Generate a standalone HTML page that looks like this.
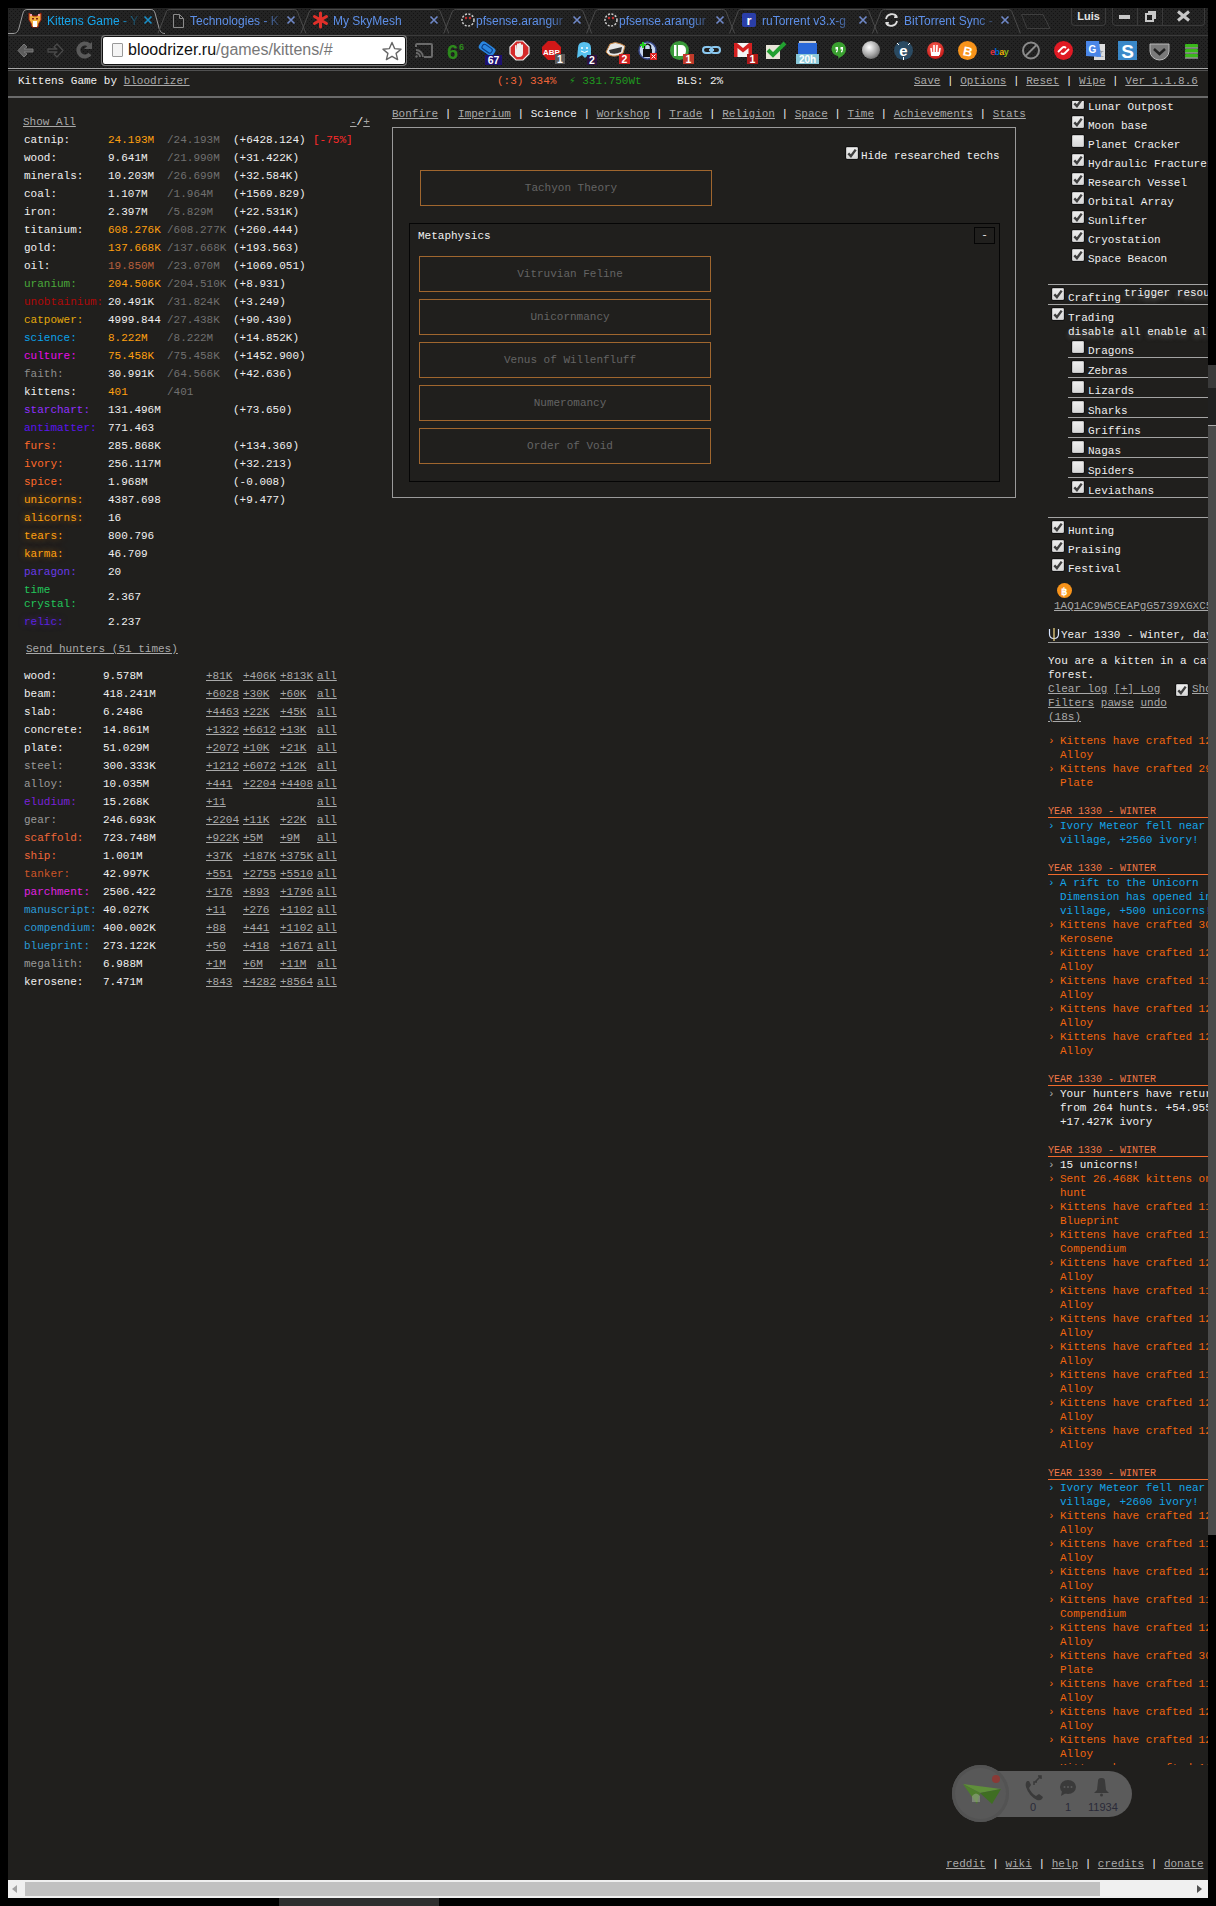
<!DOCTYPE html><html><head><meta charset="utf-8"><style>
*{margin:0;padding:0;box-sizing:border-box}
html,body{width:1216px;height:1906px;overflow:hidden;background:#000}
body{position:relative;font-family:"Liberation Mono",monospace;font-size:11px;line-height:14px;color:#e8e8e8}
.ab{position:absolute;white-space:pre}
u{text-decoration:underline;text-underline-offset:1px}
.lk{color:#a9a9a9;text-decoration:underline;text-underline-offset:1px}
.cb{position:absolute;width:12px;height:12px;border-radius:2px;background:linear-gradient(#f0f0f0,#d6d6d6);box-shadow:inset 0 0 0 1px #c4c4c4,0 0 0 1px #111}
.cb svg{position:absolute;left:0;top:0}
.sans{font-family:"Liberation Sans",sans-serif}
</style></head><body>

<svg class="ab" style="left:8px;top:8px" width="1200" height="60"><defs><pattern id="tx" width="4" height="4" patternUnits="userSpaceOnUse"><rect width="4" height="4" fill="#232323"/><rect x="1" y="1" width="1" height="1" fill="#131313"/><rect x="3" y="3" width="1" height="1" fill="#131313"/></pattern></defs><rect width="1200" height="60" fill="url(#tx)"/></svg>
<svg class="ab" style="left:0;top:0" width="1216" height="70"><path d="M13.0,33.5 C17.0,33.5 18.0,31 19.0,28 L23.0,13 C24.0,10 25.0,9.5 28.0,9.5 L150.0,9.5 C153.0,9.5 154.0,10 155.0,13 L159.0,28 C160.0,31 161.0,33.5 165.0,33.5" fill="none" stroke="#9a9a9a" stroke-width="1"/><path d="M157.9,33.5 L165.9,13 C166.9,10 167.9,9.5 170.9,9.5 L292.9,9.5 C295.9,9.5 296.9,10 297.9,13 L305.9,33.5" fill="none" stroke="#4a4a4a" stroke-width="1"/><path d="M300.8,33.5 L308.8,13 C309.8,10 310.8,9.5 313.8,9.5 L435.8,9.5 C438.8,9.5 439.8,10 440.8,13 L448.8,33.5" fill="none" stroke="#4a4a4a" stroke-width="1"/><path d="M443.70000000000005,33.5 L451.70000000000005,13 C452.70000000000005,10 453.70000000000005,9.5 456.70000000000005,9.5 L578.7,9.5 C581.7,9.5 582.7,10 583.7,13 L591.7,33.5" fill="none" stroke="#4a4a4a" stroke-width="1"/><path d="M586.6,33.5 L594.6,13 C595.6,10 596.6,9.5 599.6,9.5 L721.6,9.5 C724.6,9.5 725.6,10 726.6,13 L734.6,33.5" fill="none" stroke="#4a4a4a" stroke-width="1"/><path d="M729.5,33.5 L737.5,13 C738.5,10 739.5,9.5 742.5,9.5 L864.5,9.5 C867.5,9.5 868.5,10 869.5,13 L877.5,33.5" fill="none" stroke="#4a4a4a" stroke-width="1"/><path d="M872.4000000000001,33.5 L880.4000000000001,13 C881.4000000000001,10 882.4000000000001,9.5 885.4000000000001,9.5 L1007.4000000000001,9.5 C1010.4000000000001,9.5 1011.4000000000001,10 1012.4000000000001,13 L1020.4000000000001,33.5" fill="none" stroke="#4a4a4a" stroke-width="1"/><path d="M1021.5,14.5 L1043,14.5 L1050,28.5 L1027,28.5 Z" fill="none" stroke="#3e3e3e"/><line x1="8" y1="35.5" x2="1208" y2="35.5" stroke="#3a3a3a"/><line x1="8" y1="33.5" x2="13" y2="33.5" stroke="#9a9a9a"/></svg>
<div class="ab sans" style="left:47px;top:13px;width:96px;overflow:hidden;font-size:12px;line-height:16px;color:#16a6ec;-webkit-mask-image:linear-gradient(90deg,#000 75%,transparent 100%)">Kittens Game - Y</div>
<svg class="ab" style="left:143px;top:15px" width="10" height="10"><path d="M1.5,1.5 L8.5,8.5 M8.5,1.5 L1.5,8.5" stroke="#1a8fc8" stroke-width="1.6"/></svg>
<div class="ab sans" style="left:190px;top:13px;width:96px;overflow:hidden;font-size:12px;line-height:16px;color:#5d8fe8;-webkit-mask-image:linear-gradient(90deg,#000 75%,transparent 100%)">Technologies - K</div>
<svg class="ab" style="left:286px;top:15px" width="10" height="10"><path d="M1.5,1.5 L8.5,8.5 M8.5,1.5 L1.5,8.5" stroke="#6f88c8" stroke-width="1.6"/></svg>
<div class="ab sans" style="left:333px;top:13px;width:96px;overflow:hidden;font-size:12px;line-height:16px;color:#5d8fe8;-webkit-mask-image:linear-gradient(90deg,#000 75%,transparent 100%)">My SkyMesh</div>
<svg class="ab" style="left:429px;top:15px" width="10" height="10"><path d="M1.5,1.5 L8.5,8.5 M8.5,1.5 L1.5,8.5" stroke="#6f88c8" stroke-width="1.6"/></svg>
<div class="ab sans" style="left:476px;top:13px;width:96px;overflow:hidden;font-size:12px;line-height:16px;color:#5d8fe8;-webkit-mask-image:linear-gradient(90deg,#000 75%,transparent 100%)">pfsense.arangur</div>
<svg class="ab" style="left:572px;top:15px" width="10" height="10"><path d="M1.5,1.5 L8.5,8.5 M8.5,1.5 L1.5,8.5" stroke="#6f88c8" stroke-width="1.6"/></svg>
<div class="ab sans" style="left:619px;top:13px;width:96px;overflow:hidden;font-size:12px;line-height:16px;color:#5d8fe8;-webkit-mask-image:linear-gradient(90deg,#000 75%,transparent 100%)">pfsense.arangur</div>
<svg class="ab" style="left:715px;top:15px" width="10" height="10"><path d="M1.5,1.5 L8.5,8.5 M8.5,1.5 L1.5,8.5" stroke="#6f88c8" stroke-width="1.6"/></svg>
<div class="ab sans" style="left:762px;top:13px;width:96px;overflow:hidden;font-size:12px;line-height:16px;color:#5d8fe8;-webkit-mask-image:linear-gradient(90deg,#000 75%,transparent 100%)">ruTorrent v3.x-g</div>
<svg class="ab" style="left:858px;top:15px" width="10" height="10"><path d="M1.5,1.5 L8.5,8.5 M8.5,1.5 L1.5,8.5" stroke="#6f88c8" stroke-width="1.6"/></svg>
<div class="ab sans" style="left:904px;top:13px;width:96px;overflow:hidden;font-size:12px;line-height:16px;color:#5d8fe8;-webkit-mask-image:linear-gradient(90deg,#000 75%,transparent 100%)">BitTorrent Sync -</div>
<svg class="ab" style="left:1000px;top:15px" width="10" height="10"><path d="M1.5,1.5 L8.5,8.5 M8.5,1.5 L1.5,8.5" stroke="#6f88c8" stroke-width="1.6"/></svg>
<svg class="ab" style="left:0;top:0" width="1216" height="34"><path d="M29,13 L33,16 L37,16 L41,13 L41,20 L39,23 L38,27 L32,27 L31,23 L29,20 Z" fill="#f0b040" stroke="#a02010" stroke-width="1"/><rect x="33" y="21" width="4" height="6" fill="#fff"/><rect x="30" y="14" width="2" height="2" fill="#f4a0b0"/><rect x="38" y="14" width="2" height="2" fill="#f4a0b0"/><rect x="32" y="18" width="2" height="1.5" fill="#802010"/><rect x="36" y="18" width="2" height="1.5" fill="#802010"/><path d="M173.5,14.5 L179.5,14.5 L183.5,18.5 L183.5,27.5 L173.5,27.5 Z M179.5,14.5 L179.5,18.5 L183.5,18.5" fill="none" stroke="#8a8a8a" stroke-width="1"/><g stroke="#e0302a" stroke-width="3" stroke-linecap="round"><path d="M320.5,13 L320.5,27 M314.5,16.5 L326.5,23.5 M326.5,16.5 L314.5,23.5"/></g><circle cx="320.5" cy="20" r="3" fill="#e0302a"/><circle cx="468" cy="20" r="6" fill="none" stroke="#cfcfcf" stroke-width="1.5" stroke-dasharray="2 1.5"/><circle cx="466" cy="18" r="1.2" fill="#c03030"/><circle cx="470" cy="18" r="1.2" fill="#c03030"/><circle cx="611" cy="20" r="6" fill="none" stroke="#cfcfcf" stroke-width="1.5" stroke-dasharray="2 1.5"/><circle cx="609" cy="18" r="1.2" fill="#c03030"/><circle cx="613" cy="18" r="1.2" fill="#c03030"/><rect x="742" y="13" width="14" height="14" rx="2" fill="#2a3ea8"/><text x="749" y="25" font-family="Liberation Sans" font-weight="bold" font-size="13" fill="#fff" text-anchor="middle">r</text><path d="M886,19 A6,6 0 0 1 897,17 M897,21 A6,6 0 0 1 886,23" fill="none" stroke="#ddd" stroke-width="1.8"/><path d="M895,14 L898,18 L894,18 Z M888,26 L885,22 L889,22 Z" fill="#ddd"/></svg>
<div class="ab sans" style="left:1071px;top:8px;width:35px;height:18px;border:1px solid #3a3a3a;border-top:none;border-radius:0 0 4px 4px;color:#e4e4e4;font-weight:bold;font-size:11px;line-height:17px;text-align:center">Luis</div>
<div class="ab" style="left:1112px;top:8px;width:93px;height:18px;border:1px solid #3a3a3a;border-top:none;border-radius:0 0 4px 4px"></div>
<div class="ab" style="left:1137px;top:8px;width:1px;height:17px;background:#3a3a3a"></div>
<div class="ab" style="left:1162px;top:8px;width:1px;height:17px;background:#3a3a3a"></div>
<div class="ab" style="left:1119px;top:15px;width:11px;height:4px;background:#c8c8c8"></div>
<div class="ab" style="left:1145px;top:13px;width:9px;height:9px;border:2px solid #c8c8c8"></div>
<div class="ab" style="left:1148px;top:11px;width:8px;height:8px;border-top:2px solid #c8c8c8;border-right:2px solid #c8c8c8"></div>
<svg class="ab" style="left:1176px;top:10px" width="15" height="12"><path d="M2,1.5 L13,10.5 M13,1.5 L2,10.5" stroke="#c8c8c8" stroke-width="3"/></svg>
<svg class="ab" style="left:14px;top:40px" width="84" height="22"><path d="M4,10.5 L10,4 L13,7 L10,9 L19,9 L19,12 L10,12 L13,14 L10,17 Z" fill="#5c5c5c" stroke="#7a7a7a" stroke-width="1" stroke-linejoin="round"/><path d="M49,10.5 L43,4 L40,7 L43,9 L34,9 L34,12 L43,12 L40,14 L43,17 Z" fill="#1e1e1e" stroke="#4a4a4a" stroke-width="1.3" stroke-linejoin="round"/><path d="M75,5 A6.5,6.5 0 1 0 76,14" fill="none" stroke="#5a5a5a" stroke-width="4"/><path d="M70,9 L78,9 L78,2 Z" fill="#5a5a5a"/></svg>
<div class="ab" style="left:102px;top:36px;width:304px;height:29px;background:#fff;border:1px solid #111;border-radius:3px;box-shadow:0 0 0 1px #777"></div>
<div class="ab" style="left:112px;top:43px;width:11px;height:14px;border:1px solid #999;background:#f4f4f4;border-radius:1px"></div>
<div class="ab sans" style="left:128px;top:41px;font-size:16px;line-height:18px;color:#111">bloodrizer.ru<span style="color:#777">/games/kittens/#</span></div>
<svg class="ab" style="left:381px;top:41px" width="22" height="20"><path d="M11,1.5 L13.6,7.6 L20,8.2 L15.1,12.4 L16.6,18.6 L11,15.3 L5.4,18.6 L6.9,12.4 L2,8.2 L8.4,7.6 Z" fill="none" stroke="#666" stroke-width="1.4" stroke-linejoin="round"/></svg>
<svg class="ab" style="left:0;top:0" width="1216" height="68"><path d="M416,47 L416,45 Q416,44 417,44 L431,44 Q432,44 432,45 L432,56 Q432,57 431,57 L424,57" fill="none" stroke="#6a6a6a" stroke-width="2"/><path d="M416,50 A7,7 0 0 1 423,57 M416,53 A4,4 0 0 1 420,57" fill="none" stroke="#6a6a6a" stroke-width="1.8"/><circle cx="416.5" cy="56.5" r="1.2" fill="#6a6a6a"/><text x="447" y="59" font-family="Liberation Sans" font-weight="bold" font-size="20" fill="#2d8a1c">6</text><text x="459" y="50" font-family="Liberation Sans" font-weight="bold" font-size="9" fill="#2d8a1c">6</text><g transform="rotate(35 487 48)"><rect x="479" y="44" width="17" height="9" rx="3" fill="#2a86e0"/><rect x="482" y="46" width="11" height="5" rx="2" fill="none" stroke="#0a3a80" stroke-width="1"/></g><rect x="485" y="55" width="17" height="10" fill="#1c1070"/><text x="493.5" y="64" font-family="Liberation Sans" font-weight="bold" font-size="10.5" fill="#fff" text-anchor="middle">67</text><path d="M516,41 L523,41 L529,47 L529,54 L523,60 L516,60 L510,54 L510,47 Z" fill="#d42a2a" stroke="#eee" stroke-width="1.2"/><path d="M515,55 L515,46 Q515,44.5 516.5,45 L517,50 L517,44 Q518,42.5 519,44 L519,50 L519,43.5 Q520,42 521,43.5 L521,50 L521,45 Q522,43.5 523,45 L523,53 Q523,57 519,57 L517,57 Z" fill="#eee"/><path d="M548,41 L555,41 L561,47 L561,54 L555,60 L548,60 L542,54 L542,47 Z" fill="#d01818"/><text x="551.5" y="55" font-family="Liberation Sans" font-weight="bold" font-size="8" fill="#fff" text-anchor="middle">ABP</text><rect x="555" y="54" width="10" height="10" fill="#5a5a5a"/><text x="560.0" y="63" font-family="Liberation Sans" font-weight="bold" font-size="10.5" fill="#fff" text-anchor="middle">1</text><path d="M577,58 L578,48 Q578,42 584,42 Q591,42 591,48 L591,57 L588,55 L585,58 L582,55 Z" fill="#58c2f0"/><circle cx="582" cy="48" r="1" fill="#fff"/><circle cx="587" cy="48" r="1" fill="#fff"/><path d="M581,51 Q584.5,54 588,51" stroke="#fff" fill="none" stroke-width="1"/><rect x="587" y="55" width="10" height="10" fill="#2a1040"/><text x="592.0" y="64" font-family="Liberation Sans" font-weight="bold" font-size="10.5" fill="#fff" text-anchor="middle">2</text><path d="M606,52 L610,44 Q615,41 621,44 L625,46 L623,53 Q616,58 609,55 Z" fill="#e8e8e8" stroke="#c08040" stroke-width="1"/><path d="M609,50 L622,47 L621,52 Q615,55 610,53 Z" fill="#333"/><rect x="619" y="54" width="11" height="10" fill="#d02020"/><text x="624.5" y="63" font-family="Liberation Sans" font-weight="bold" font-size="10.5" fill="#fff" text-anchor="middle">2</text><circle cx="647.5" cy="50.5" r="8.5" fill="#c8d8f0" stroke="#3a4a8a" stroke-width="1.5"/><rect x="643" y="49" width="9" height="8" fill="#111"/><path d="M644.5,49 L644.5,46 Q647.5,42 650.5,46 L650.5,49" fill="none" stroke="#111" stroke-width="1.5"/><path d="M643,42 L643,48 M640,45 L646,45" stroke="#22cc22" stroke-width="2"/><rect x="650" y="53" width="7" height="7" fill="#e02020"/><path d="M651.5,54.5 L655.5,58.5 M655.5,54.5 L651.5,58.5" stroke="#fff" stroke-width="1"/><circle cx="679.5" cy="50.5" r="9.5" fill="#3a9a3a"/><rect x="674" y="45" width="2.5" height="11" fill="#fff"/><path d="M678,45 L681,45 Q686,45 686,50.5 Q686,56 681,56 L678,56 Z" fill="#fff"/><rect x="683" y="54" width="11" height="10" fill="#c03a2a"/><text x="688.5" y="63" font-family="Liberation Sans" font-weight="bold" font-size="10.5" fill="#fff" text-anchor="middle">1</text><rect x="703" y="47" width="9" height="6" rx="3" fill="none" stroke="#8ac8f0" stroke-width="2"/><rect x="711" y="47" width="9" height="6" rx="3" fill="none" stroke="#8ac8f0" stroke-width="2"/><rect x="709" y="49" width="5" height="2" fill="#8ac8f0"/><rect x="734" y="43" width="18" height="14" fill="#f4f4f4"/><path d="M734,43 L734,57 L737.5,57 L737.5,48 L743,52.5 L748.5,48 L748.5,57 L752,57 L752,43 L749,43 L743,48 L737,43 Z" fill="#d42020"/><rect x="747" y="54" width="11" height="10" fill="#b01818"/><text x="752.5" y="63" font-family="Liberation Sans" font-weight="bold" font-size="10.5" fill="#fff" text-anchor="middle">1</text><rect x="766" y="45" width="14" height="14" fill="#e8e4d8"/><path d="M768,50 L773,55 L785,43" fill="none" stroke="#22a030" stroke-width="4"/><rect x="799" y="41" width="17" height="3" fill="#ccc"/><rect x="798" y="43" width="19" height="11" fill="#2a68d8"/><rect x="796" y="54" width="23" height="10" fill="#8ac8d8"/><text x="807.5" y="63" font-family="Liberation Sans" font-weight="bold" font-size="10" fill="#fff" text-anchor="middle">20h</text><path d="M839,42 A7,7 0 0 1 846,49 Q846,55 839,58 L839,60 L838,56 A7,7 0 0 1 839,42 Z" fill="#3aa030"/><path d="M835.5,47 L838,47 L838,49.5 Q838,52 836,52.5 L836,51 Q837,50.5 837,49.5 L835.5,49.5 Z M840.5,47 L843,47 L843,49.5 Q843,52 841,52.5 L841,51 Q842,50.5 842,49.5 L840.5,49.5 Z" fill="#fff"/><defs><radialGradient id="gg" cx="40%" cy="35%" r="70%"><stop offset="0" stop-color="#fff"/><stop offset=".6" stop-color="#aaa"/><stop offset="1" stop-color="#666"/></radialGradient></defs><circle cx="871" cy="50" r="9" fill="url(#gg)"/><circle cx="903.5" cy="50.5" r="9.5" fill="#2a4a62"/><text x="903.5" y="56" font-family="Liberation Sans" font-weight="bold" font-size="15" fill="#fff" text-anchor="middle">e</text><path d="M897,43 L899,45 M910,43 L908,45 M903.5,57 L903.5,60" stroke="#fff" stroke-width="1"/><defs><radialGradient id="rg" cx="45%" cy="35%" r="70%"><stop offset="0" stop-color="#ff6a5a"/><stop offset="1" stop-color="#c01010"/></radialGradient></defs><circle cx="935.5" cy="50.5" r="8.5" fill="url(#rg)"/><path d="M932,56 L931,48 M934,55 L934,45 M936.5,55 L937,45 M939,55 L940,48" stroke="#fff" stroke-width="1.6"/><rect x="932" y="52" width="7" height="4" fill="#fff"/><circle cx="967.5" cy="50.5" r="9.5" fill="#f7931a"/><text x="968" y="56" font-family="Liberation Sans" font-weight="bold" font-size="13" fill="#fff" text-anchor="middle" transform="rotate(12 968 50)">B</text><text x="990" y="55" font-family="Liberation Sans" font-weight="bold" font-size="9" letter-spacing="-0.6"><tspan fill="#e53238">e</tspan><tspan fill="#0064d2">b</tspan><tspan fill="#f5af02">a</tspan><tspan fill="#86b817">y</tspan></text><circle cx="1031" cy="50.5" r="8" fill="none" stroke="#8a8a8a" stroke-width="2"/><path d="M1025.5,56 L1036.5,45" stroke="#8a8a8a" stroke-width="2"/><circle cx="1063.5" cy="50.5" r="9.5" fill="#e01a24"/><path d="M1058,52 L1062,48 Q1064,46 1066,48 M1069,49 L1065,53 Q1063,55 1061,53" fill="none" stroke="#fff" stroke-width="1.8"/><rect x="1094" y="44" width="11" height="16" fill="#ddd"/><text x="1100" y="56" font-family="Liberation Sans" font-size="8" fill="#888" text-anchor="middle">文</text><path d="M1086,41 L1099,41 L1101,57 L1086,56 Z" fill="#4a86e8"/><text x="1092.5" y="53" font-family="Liberation Sans" font-weight="bold" font-size="10" fill="#fff" text-anchor="middle">G</text><rect x="1118" y="41" width="19" height="19" fill="#3a88c8"/><text x="1127.5" y="58" font-family="Liberation Sans" font-weight="bold" font-size="19" fill="#fff" text-anchor="middle">S</text><path d="M1150,44 L1169,44 L1169,51 A9.5,9 0 0 1 1150,51 Z" fill="#7a7a7a" stroke="#bbb" stroke-width="1"/><path d="M1154,49 L1159.5,54 L1165,49" fill="none" stroke="#222" stroke-width="2.5"/><rect x="1185" y="44" width="13" height="3.5" rx="1" fill="#3ab81a"/><rect x="1185" y="47.5" width="13" height="1" fill="#ccc"/><rect x="1185" y="49" width="13" height="3.5" rx="1" fill="#3ab81a"/><rect x="1185" y="52.5" width="13" height="1" fill="#ccc"/><rect x="1185" y="54" width="13" height="3.5" rx="1" fill="#3ab81a"/><rect x="1185" y="57.5" width="13" height="1" fill="#ccc"/></svg>
<div class="ab" style="left:8px;top:68px;width:1200px;height:1812px;background:#201f1d"></div>
<div class="ab" style="left:8px;top:68px;width:1200px;height:1px;background:#a8a8a8"></div>
<div class="ab" style="left:8px;top:69px;width:1200px;height:1px;background:#161616"></div>
<div class="ab" style="left:8px;top:70px;width:1200px;height:1px;background:#505050"></div>
<div class="ab" style="left:8px;top:96px;width:1200px;height:2px;background:#6a6a6a"></div>
<div class="ab" style="left:18px;top:74px;color:#f0f0f0;font-size:11px;">Kittens Game by <span class="lk">bloodrizer</span></div>
<div class="ab" style="left:497px;top:74px;color:#f0663a;font-size:11px;">(:3) 334%</div>
<div class="ab" style="left:569px;top:74px;color:#1f9a1f;font-size:11px;">⚡ 331.750Wt</div>
<div class="ab" style="left:677px;top:74px;color:#f0f0f0;font-size:11px;">BLS: 2%</div>
<div class="ab" style="left:914px;top:74px;color:#f0f0f0;font-size:11px;"><span class="lk">Save</span> | <span class="lk">Options</span> | <span class="lk">Reset</span> | <span class="lk">Wipe</span> | <span class="lk">Ver 1.1.8.6</span></div>
<div class="ab" style="left:23px;top:115px;color:#f0f0f0;font-size:11px;"><span class="lk">Show All</span></div>
<div class="ab" style="left:350px;top:115px;color:#f0f0f0;font-size:11px;"><span class="lk">-</span>/<span class="lk">+</span></div>
<div class="ab" style="left:24px;top:133px;color:#f0f0f0;font-size:11px;">catnip:</div>
<div class="ab" style="left:108px;top:133px;color:#ffa010;font-size:11px;">24.193M</div>
<div class="ab" style="left:167px;top:133px;color:#707070;font-size:11px;">/24.193M</div>
<div class="ab" style="left:233px;top:133px;color:#f0f0f0;font-size:11px;">(+6428.124)</div>
<div class="ab" style="left:313px;top:133px;color:#ff2a2a;font-size:11px;">[-75%]</div>
<div class="ab" style="left:24px;top:151px;color:#f0f0f0;font-size:11px;">wood:</div>
<div class="ab" style="left:108px;top:151px;color:#f0f0f0;font-size:11px;">9.641M</div>
<div class="ab" style="left:167px;top:151px;color:#707070;font-size:11px;">/21.990M</div>
<div class="ab" style="left:233px;top:151px;color:#f0f0f0;font-size:11px;">(+31.422K)</div>
<div class="ab" style="left:24px;top:169px;color:#f0f0f0;font-size:11px;">minerals:</div>
<div class="ab" style="left:108px;top:169px;color:#f0f0f0;font-size:11px;">10.203M</div>
<div class="ab" style="left:167px;top:169px;color:#707070;font-size:11px;">/26.699M</div>
<div class="ab" style="left:233px;top:169px;color:#f0f0f0;font-size:11px;">(+32.584K)</div>
<div class="ab" style="left:24px;top:187px;color:#f0f0f0;font-size:11px;">coal:</div>
<div class="ab" style="left:108px;top:187px;color:#f0f0f0;font-size:11px;">1.107M</div>
<div class="ab" style="left:167px;top:187px;color:#707070;font-size:11px;">/1.964M</div>
<div class="ab" style="left:233px;top:187px;color:#f0f0f0;font-size:11px;">(+1569.829)</div>
<div class="ab" style="left:24px;top:205px;color:#f0f0f0;font-size:11px;">iron:</div>
<div class="ab" style="left:108px;top:205px;color:#f0f0f0;font-size:11px;">2.397M</div>
<div class="ab" style="left:167px;top:205px;color:#707070;font-size:11px;">/5.829M</div>
<div class="ab" style="left:233px;top:205px;color:#f0f0f0;font-size:11px;">(+22.531K)</div>
<div class="ab" style="left:24px;top:223px;color:#f0f0f0;font-size:11px;">titanium:</div>
<div class="ab" style="left:108px;top:223px;color:#ffa010;font-size:11px;">608.276K</div>
<div class="ab" style="left:167px;top:223px;color:#707070;font-size:11px;">/608.277K</div>
<div class="ab" style="left:233px;top:223px;color:#f0f0f0;font-size:11px;">(+260.444)</div>
<div class="ab" style="left:24px;top:241px;color:#f0f0f0;font-size:11px;">gold:</div>
<div class="ab" style="left:108px;top:241px;color:#ffa010;font-size:11px;">137.668K</div>
<div class="ab" style="left:167px;top:241px;color:#707070;font-size:11px;">/137.668K</div>
<div class="ab" style="left:233px;top:241px;color:#f0f0f0;font-size:11px;">(+193.563)</div>
<div class="ab" style="left:24px;top:259px;color:#f0f0f0;font-size:11px;">oil:</div>
<div class="ab" style="left:108px;top:259px;color:#b8603e;font-size:11px;">19.850M</div>
<div class="ab" style="left:167px;top:259px;color:#707070;font-size:11px;">/23.070M</div>
<div class="ab" style="left:233px;top:259px;color:#f0f0f0;font-size:11px;">(+1069.051)</div>
<div class="ab" style="left:24px;top:277px;color:#4aa83a;font-size:11px;">uranium:</div>
<div class="ab" style="left:108px;top:277px;color:#ffa010;font-size:11px;">204.506K</div>
<div class="ab" style="left:167px;top:277px;color:#707070;font-size:11px;">/204.510K</div>
<div class="ab" style="left:233px;top:277px;color:#f0f0f0;font-size:11px;">(+8.931)</div>
<div class="ab" style="left:24px;top:295px;color:#b00808;font-size:11px;">unobtainium:</div>
<div class="ab" style="left:108px;top:295px;color:#f0f0f0;font-size:11px;">20.491K</div>
<div class="ab" style="left:167px;top:295px;color:#707070;font-size:11px;">/31.824K</div>
<div class="ab" style="left:233px;top:295px;color:#f0f0f0;font-size:11px;">(+3.249)</div>
<div class="ab" style="left:24px;top:313px;color:#e2a80c;font-size:11px;">catpower:</div>
<div class="ab" style="left:108px;top:313px;color:#f0f0f0;font-size:11px;">4999.844</div>
<div class="ab" style="left:167px;top:313px;color:#707070;font-size:11px;">/27.438K</div>
<div class="ab" style="left:233px;top:313px;color:#f0f0f0;font-size:11px;">(+90.430)</div>
<div class="ab" style="left:24px;top:331px;color:#0aa2ea;font-size:11px;">science:</div>
<div class="ab" style="left:108px;top:331px;color:#ffa010;font-size:11px;">8.222M</div>
<div class="ab" style="left:167px;top:331px;color:#707070;font-size:11px;">/8.222M</div>
<div class="ab" style="left:233px;top:331px;color:#f0f0f0;font-size:11px;">(+14.852K)</div>
<div class="ab" style="left:24px;top:349px;color:#e80ce8;font-size:11px;">culture:</div>
<div class="ab" style="left:108px;top:349px;color:#ffa010;font-size:11px;">75.458K</div>
<div class="ab" style="left:167px;top:349px;color:#707070;font-size:11px;">/75.458K</div>
<div class="ab" style="left:233px;top:349px;color:#f0f0f0;font-size:11px;">(+1452.900)</div>
<div class="ab" style="left:24px;top:367px;color:#8e8e8e;font-size:11px;">faith:</div>
<div class="ab" style="left:108px;top:367px;color:#f0f0f0;font-size:11px;">30.991K</div>
<div class="ab" style="left:167px;top:367px;color:#707070;font-size:11px;">/64.566K</div>
<div class="ab" style="left:233px;top:367px;color:#f0f0f0;font-size:11px;">(+42.636)</div>
<div class="ab" style="left:24px;top:385px;color:#f0f0f0;font-size:11px;">kittens:</div>
<div class="ab" style="left:108px;top:385px;color:#ffa010;font-size:11px;">401</div>
<div class="ab" style="left:167px;top:385px;color:#707070;font-size:11px;">/401</div>
<div class="ab" style="left:24px;top:403px;color:#9030ff;font-size:11px;">starchart:</div>
<div class="ab" style="left:108px;top:403px;color:#f0f0f0;font-size:11px;">131.496M</div>
<div class="ab" style="left:233px;top:403px;color:#f0f0f0;font-size:11px;">(+73.650)</div>
<div class="ab" style="left:24px;top:421px;color:#5a14f0;font-size:11px;">antimatter:</div>
<div class="ab" style="left:108px;top:421px;color:#f0f0f0;font-size:11px;">771.463</div>
<div class="ab" style="left:24px;top:439px;color:#ff6a2a;font-size:11px;">furs:</div>
<div class="ab" style="left:108px;top:439px;color:#f0f0f0;font-size:11px;">285.868K</div>
<div class="ab" style="left:233px;top:439px;color:#f0f0f0;font-size:11px;">(+134.369)</div>
<div class="ab" style="left:24px;top:457px;color:#ff6a2a;font-size:11px;">ivory:</div>
<div class="ab" style="left:108px;top:457px;color:#f0f0f0;font-size:11px;">256.117M</div>
<div class="ab" style="left:233px;top:457px;color:#f0f0f0;font-size:11px;">(+32.213)</div>
<div class="ab" style="left:24px;top:475px;color:#ff6a2a;font-size:11px;">spice:</div>
<div class="ab" style="left:108px;top:475px;color:#f0f0f0;font-size:11px;">1.968M</div>
<div class="ab" style="left:233px;top:475px;color:#f0f0f0;font-size:11px;">(-0.008)</div>
<div class="ab" style="left:24px;top:493px;color:#ffa010;font-size:11px;text-shadow:0 0 6px rgba(255,140,0,.55)">unicorns:</div>
<div class="ab" style="left:108px;top:493px;color:#f0f0f0;font-size:11px;">4387.698</div>
<div class="ab" style="left:233px;top:493px;color:#f0f0f0;font-size:11px;">(+9.477)</div>
<div class="ab" style="left:24px;top:511px;color:#ffa010;font-size:11px;text-shadow:0 0 6px rgba(255,140,0,.55)">alicorns:</div>
<div class="ab" style="left:108px;top:511px;color:#f0f0f0;font-size:11px;">16</div>
<div class="ab" style="left:24px;top:529px;color:#ffa010;font-size:11px;text-shadow:0 0 6px rgba(255,140,0,.55)">tears:</div>
<div class="ab" style="left:108px;top:529px;color:#f0f0f0;font-size:11px;">800.796</div>
<div class="ab" style="left:24px;top:547px;color:#ffa010;font-size:11px;text-shadow:0 0 6px rgba(255,140,0,.55)">karma:</div>
<div class="ab" style="left:108px;top:547px;color:#f0f0f0;font-size:11px;">46.709</div>
<div class="ab" style="left:24px;top:565px;color:#6a3ae8;font-size:11px;">paragon:</div>
<div class="ab" style="left:108px;top:565px;color:#f0f0f0;font-size:11px;">20</div>
<div class="ab" style="left:24px;top:583px;color:#22c55a;font-size:11px;">time</div>
<div class="ab" style="left:24px;top:597px;color:#22c55a;font-size:11px;">crystal:</div>
<div class="ab" style="left:108px;top:590px;color:#f0f0f0;font-size:11px;">2.367</div>
<div class="ab" style="left:24px;top:615px;color:#5a22e0;font-size:11px;text-shadow:0 0 6px rgba(120,40,200,.7)">relic:</div>
<div class="ab" style="left:108px;top:615px;color:#f0f0f0;font-size:11px;">2.237</div>
<div class="ab" style="left:26px;top:642px;color:#f0f0f0;font-size:11px;"><span class="lk">Send hunters (51 times)</span></div>
<div class="ab" style="left:24px;top:669px;color:#f0f0f0;font-size:11px;">wood:</div>
<div class="ab" style="left:103px;top:669px;color:#f0f0f0;font-size:11px;">9.578M</div>
<div class="ab" style="left:206px;top:669px;color:#f0f0f0;font-size:11px;"><span class="lk">+81K</span></div>
<div class="ab" style="left:243px;top:669px;color:#f0f0f0;font-size:11px;"><span class="lk">+406K</span></div>
<div class="ab" style="left:280px;top:669px;color:#f0f0f0;font-size:11px;"><span class="lk">+813K</span></div>
<div class="ab" style="left:317px;top:669px;color:#f0f0f0;font-size:11px;"><span class="lk">all</span></div>
<div class="ab" style="left:24px;top:687px;color:#f0f0f0;font-size:11px;">beam:</div>
<div class="ab" style="left:103px;top:687px;color:#f0f0f0;font-size:11px;">418.241M</div>
<div class="ab" style="left:206px;top:687px;color:#f0f0f0;font-size:11px;"><span class="lk">+6028</span></div>
<div class="ab" style="left:243px;top:687px;color:#f0f0f0;font-size:11px;"><span class="lk">+30K</span></div>
<div class="ab" style="left:280px;top:687px;color:#f0f0f0;font-size:11px;"><span class="lk">+60K</span></div>
<div class="ab" style="left:317px;top:687px;color:#f0f0f0;font-size:11px;"><span class="lk">all</span></div>
<div class="ab" style="left:24px;top:705px;color:#f0f0f0;font-size:11px;">slab:</div>
<div class="ab" style="left:103px;top:705px;color:#f0f0f0;font-size:11px;">6.248G</div>
<div class="ab" style="left:206px;top:705px;color:#f0f0f0;font-size:11px;"><span class="lk">+4463</span></div>
<div class="ab" style="left:243px;top:705px;color:#f0f0f0;font-size:11px;"><span class="lk">+22K</span></div>
<div class="ab" style="left:280px;top:705px;color:#f0f0f0;font-size:11px;"><span class="lk">+45K</span></div>
<div class="ab" style="left:317px;top:705px;color:#f0f0f0;font-size:11px;"><span class="lk">all</span></div>
<div class="ab" style="left:24px;top:723px;color:#f0f0f0;font-size:11px;">concrete:</div>
<div class="ab" style="left:103px;top:723px;color:#f0f0f0;font-size:11px;">14.861M</div>
<div class="ab" style="left:206px;top:723px;color:#f0f0f0;font-size:11px;"><span class="lk">+1322</span></div>
<div class="ab" style="left:243px;top:723px;color:#f0f0f0;font-size:11px;"><span class="lk">+6612</span></div>
<div class="ab" style="left:280px;top:723px;color:#f0f0f0;font-size:11px;"><span class="lk">+13K</span></div>
<div class="ab" style="left:317px;top:723px;color:#f0f0f0;font-size:11px;"><span class="lk">all</span></div>
<div class="ab" style="left:24px;top:741px;color:#f0f0f0;font-size:11px;">plate:</div>
<div class="ab" style="left:103px;top:741px;color:#f0f0f0;font-size:11px;">51.029M</div>
<div class="ab" style="left:206px;top:741px;color:#f0f0f0;font-size:11px;"><span class="lk">+2072</span></div>
<div class="ab" style="left:243px;top:741px;color:#f0f0f0;font-size:11px;"><span class="lk">+10K</span></div>
<div class="ab" style="left:280px;top:741px;color:#f0f0f0;font-size:11px;"><span class="lk">+21K</span></div>
<div class="ab" style="left:317px;top:741px;color:#f0f0f0;font-size:11px;"><span class="lk">all</span></div>
<div class="ab" style="left:24px;top:759px;color:#9a9a9a;font-size:11px;">steel:</div>
<div class="ab" style="left:103px;top:759px;color:#f0f0f0;font-size:11px;">300.333K</div>
<div class="ab" style="left:206px;top:759px;color:#f0f0f0;font-size:11px;"><span class="lk">+1212</span></div>
<div class="ab" style="left:243px;top:759px;color:#f0f0f0;font-size:11px;"><span class="lk">+6072</span></div>
<div class="ab" style="left:280px;top:759px;color:#f0f0f0;font-size:11px;"><span class="lk">+12K</span></div>
<div class="ab" style="left:317px;top:759px;color:#f0f0f0;font-size:11px;"><span class="lk">all</span></div>
<div class="ab" style="left:24px;top:777px;color:#9a9a9a;font-size:11px;">alloy:</div>
<div class="ab" style="left:103px;top:777px;color:#f0f0f0;font-size:11px;">10.035M</div>
<div class="ab" style="left:206px;top:777px;color:#f0f0f0;font-size:11px;"><span class="lk">+441</span></div>
<div class="ab" style="left:243px;top:777px;color:#f0f0f0;font-size:11px;"><span class="lk">+2204</span></div>
<div class="ab" style="left:280px;top:777px;color:#f0f0f0;font-size:11px;"><span class="lk">+4408</span></div>
<div class="ab" style="left:317px;top:777px;color:#f0f0f0;font-size:11px;"><span class="lk">all</span></div>
<div class="ab" style="left:24px;top:795px;color:#7a22d8;font-size:11px;">eludium:</div>
<div class="ab" style="left:103px;top:795px;color:#f0f0f0;font-size:11px;">15.268K</div>
<div class="ab" style="left:206px;top:795px;color:#f0f0f0;font-size:11px;"><span class="lk">+11</span></div>
<div class="ab" style="left:317px;top:795px;color:#f0f0f0;font-size:11px;"><span class="lk">all</span></div>
<div class="ab" style="left:24px;top:813px;color:#9a9a9a;font-size:11px;">gear:</div>
<div class="ab" style="left:103px;top:813px;color:#f0f0f0;font-size:11px;">246.693K</div>
<div class="ab" style="left:206px;top:813px;color:#f0f0f0;font-size:11px;"><span class="lk">+2204</span></div>
<div class="ab" style="left:243px;top:813px;color:#f0f0f0;font-size:11px;"><span class="lk">+11K</span></div>
<div class="ab" style="left:280px;top:813px;color:#f0f0f0;font-size:11px;"><span class="lk">+22K</span></div>
<div class="ab" style="left:317px;top:813px;color:#f0f0f0;font-size:11px;"><span class="lk">all</span></div>
<div class="ab" style="left:24px;top:831px;color:#f0683a;font-size:11px;">scaffold:</div>
<div class="ab" style="left:103px;top:831px;color:#f0f0f0;font-size:11px;">723.748M</div>
<div class="ab" style="left:206px;top:831px;color:#f0f0f0;font-size:11px;"><span class="lk">+922K</span></div>
<div class="ab" style="left:243px;top:831px;color:#f0f0f0;font-size:11px;"><span class="lk">+5M</span></div>
<div class="ab" style="left:280px;top:831px;color:#f0f0f0;font-size:11px;"><span class="lk">+9M</span></div>
<div class="ab" style="left:317px;top:831px;color:#f0f0f0;font-size:11px;"><span class="lk">all</span></div>
<div class="ab" style="left:24px;top:849px;color:#f0683a;font-size:11px;">ship:</div>
<div class="ab" style="left:103px;top:849px;color:#f0f0f0;font-size:11px;">1.001M</div>
<div class="ab" style="left:206px;top:849px;color:#f0f0f0;font-size:11px;"><span class="lk">+37K</span></div>
<div class="ab" style="left:243px;top:849px;color:#f0f0f0;font-size:11px;"><span class="lk">+187K</span></div>
<div class="ab" style="left:280px;top:849px;color:#f0f0f0;font-size:11px;"><span class="lk">+375K</span></div>
<div class="ab" style="left:317px;top:849px;color:#f0f0f0;font-size:11px;"><span class="lk">all</span></div>
<div class="ab" style="left:24px;top:867px;color:#cc5628;font-size:11px;">tanker:</div>
<div class="ab" style="left:103px;top:867px;color:#f0f0f0;font-size:11px;">42.997K</div>
<div class="ab" style="left:206px;top:867px;color:#f0f0f0;font-size:11px;"><span class="lk">+551</span></div>
<div class="ab" style="left:243px;top:867px;color:#f0f0f0;font-size:11px;"><span class="lk">+2755</span></div>
<div class="ab" style="left:280px;top:867px;color:#f0f0f0;font-size:11px;"><span class="lk">+5510</span></div>
<div class="ab" style="left:317px;top:867px;color:#f0f0f0;font-size:11px;"><span class="lk">all</span></div>
<div class="ab" style="left:24px;top:885px;color:#e022e0;font-size:11px;">parchment:</div>
<div class="ab" style="left:103px;top:885px;color:#f0f0f0;font-size:11px;">2506.422</div>
<div class="ab" style="left:206px;top:885px;color:#f0f0f0;font-size:11px;"><span class="lk">+176</span></div>
<div class="ab" style="left:243px;top:885px;color:#f0f0f0;font-size:11px;"><span class="lk">+893</span></div>
<div class="ab" style="left:280px;top:885px;color:#f0f0f0;font-size:11px;"><span class="lk">+1796</span></div>
<div class="ab" style="left:317px;top:885px;color:#f0f0f0;font-size:11px;"><span class="lk">all</span></div>
<div class="ab" style="left:24px;top:903px;color:#2a9ad6;font-size:11px;">manuscript:</div>
<div class="ab" style="left:103px;top:903px;color:#f0f0f0;font-size:11px;">40.027K</div>
<div class="ab" style="left:206px;top:903px;color:#f0f0f0;font-size:11px;"><span class="lk">+11</span></div>
<div class="ab" style="left:243px;top:903px;color:#f0f0f0;font-size:11px;"><span class="lk">+276</span></div>
<div class="ab" style="left:280px;top:903px;color:#f0f0f0;font-size:11px;"><span class="lk">+1102</span></div>
<div class="ab" style="left:317px;top:903px;color:#f0f0f0;font-size:11px;"><span class="lk">all</span></div>
<div class="ab" style="left:24px;top:921px;color:#2a9ad6;font-size:11px;">compendium:</div>
<div class="ab" style="left:103px;top:921px;color:#f0f0f0;font-size:11px;">400.002K</div>
<div class="ab" style="left:206px;top:921px;color:#f0f0f0;font-size:11px;"><span class="lk">+88</span></div>
<div class="ab" style="left:243px;top:921px;color:#f0f0f0;font-size:11px;"><span class="lk">+441</span></div>
<div class="ab" style="left:280px;top:921px;color:#f0f0f0;font-size:11px;"><span class="lk">+1102</span></div>
<div class="ab" style="left:317px;top:921px;color:#f0f0f0;font-size:11px;"><span class="lk">all</span></div>
<div class="ab" style="left:24px;top:939px;color:#2a9ad6;font-size:11px;">blueprint:</div>
<div class="ab" style="left:103px;top:939px;color:#f0f0f0;font-size:11px;">273.122K</div>
<div class="ab" style="left:206px;top:939px;color:#f0f0f0;font-size:11px;"><span class="lk">+50</span></div>
<div class="ab" style="left:243px;top:939px;color:#f0f0f0;font-size:11px;"><span class="lk">+418</span></div>
<div class="ab" style="left:280px;top:939px;color:#f0f0f0;font-size:11px;"><span class="lk">+1671</span></div>
<div class="ab" style="left:317px;top:939px;color:#f0f0f0;font-size:11px;"><span class="lk">all</span></div>
<div class="ab" style="left:24px;top:957px;color:#9a9a9a;font-size:11px;">megalith:</div>
<div class="ab" style="left:103px;top:957px;color:#f0f0f0;font-size:11px;">6.988M</div>
<div class="ab" style="left:206px;top:957px;color:#f0f0f0;font-size:11px;"><span class="lk">+1M</span></div>
<div class="ab" style="left:243px;top:957px;color:#f0f0f0;font-size:11px;"><span class="lk">+6M</span></div>
<div class="ab" style="left:280px;top:957px;color:#f0f0f0;font-size:11px;"><span class="lk">+11M</span></div>
<div class="ab" style="left:317px;top:957px;color:#f0f0f0;font-size:11px;"><span class="lk">all</span></div>
<div class="ab" style="left:24px;top:975px;color:#f0f0f0;font-size:11px;">kerosene:</div>
<div class="ab" style="left:103px;top:975px;color:#f0f0f0;font-size:11px;">7.471M</div>
<div class="ab" style="left:206px;top:975px;color:#f0f0f0;font-size:11px;"><span class="lk">+843</span></div>
<div class="ab" style="left:243px;top:975px;color:#f0f0f0;font-size:11px;"><span class="lk">+4282</span></div>
<div class="ab" style="left:280px;top:975px;color:#f0f0f0;font-size:11px;"><span class="lk">+8564</span></div>
<div class="ab" style="left:317px;top:975px;color:#f0f0f0;font-size:11px;"><span class="lk">all</span></div>
<div class="ab" style="left:392px;top:107px;color:#f0f0f0;font-size:11px;"><span class="lk">Bonfire</span> | <span class="lk">Imperium</span> | Science | <span class="lk">Workshop</span> | <span class="lk">Trade</span> | <span class="lk">Religion</span> | <span class="lk">Space</span> | <span class="lk">Time</span> | <span class="lk">Achievements</span> | <span class="lk">Stats</span></div>
<div class="ab" style="left:392px;top:127px;width:624px;height:371px;border:1px solid #9a9a9a"></div>
<div class="cb" style="left:846px;top:147px"><svg width="12" height="12"><path d="M2.3,6.4 L4.9,9.1 L9.7,2.6" fill="none" stroke="#3e3e3e" stroke-width="2.4"/></svg></div>
<div class="ab" style="left:861px;top:149px;color:#f0f0f0;font-size:11px;">Hide researched techs</div>
<div class="ab" style="left:420px;top:170px;width:292px;height:36px;border:1px solid #a0662e;color:#646464;font-size:11px;line-height:34px;text-align:center;padding-left:10px">Tachyon Theory</div>
<div class="ab" style="left:409px;top:223px;width:591px;height:259px;border:1px solid #050505"></div>
<div class="ab" style="left:418px;top:229px;color:#f0f0f0;font-size:11px;">Metaphysics</div>
<div class="ab" style="left:974px;top:227px;width:21px;height:17px;border:1px solid #050505;color:#e8e8e8;text-align:center;line-height:15px">-</div>
<div class="ab" style="left:419px;top:256px;width:292px;height:36px;border:1px solid #a0662e;color:#646464;font-size:11px;line-height:34px;text-align:center;padding-left:10px">Vitruvian Feline</div>
<div class="ab" style="left:419px;top:299px;width:292px;height:36px;border:1px solid #a0662e;color:#646464;font-size:11px;line-height:34px;text-align:center;padding-left:10px">Unicornmancy</div>
<div class="ab" style="left:419px;top:342px;width:292px;height:36px;border:1px solid #a0662e;color:#646464;font-size:11px;line-height:34px;text-align:center;padding-left:10px">Venus of Willenfluff</div>
<div class="ab" style="left:419px;top:385px;width:292px;height:36px;border:1px solid #a0662e;color:#646464;font-size:11px;line-height:34px;text-align:center;padding-left:10px">Numeromancy</div>
<div class="ab" style="left:419px;top:428px;width:292px;height:36px;border:1px solid #a0662e;color:#646464;font-size:11px;line-height:34px;text-align:center;padding-left:10px">Order of Void</div>
<div class="ab" style="left:1040px;top:101px;width:168px;height:1664px;overflow:hidden">
<div class="cb" style="left:32px;top:-4px"><svg width="12" height="12"><path d="M2.3,6.4 L4.9,9.1 L9.7,2.6" fill="none" stroke="#3e3e3e" stroke-width="2.4"/></svg></div>
<div class="ab" style="left:48px;top:-1px;color:#f0f0f0;font-size:11px;">Lunar Outpost</div>
<div class="cb" style="left:32px;top:15px"><svg width="12" height="12"><path d="M2.3,6.4 L4.9,9.1 L9.7,2.6" fill="none" stroke="#3e3e3e" stroke-width="2.4"/></svg></div>
<div class="ab" style="left:48px;top:18px;color:#f0f0f0;font-size:11px;">Moon base</div>
<div class="cb" style="left:32px;top:34px"></div>
<div class="ab" style="left:48px;top:37px;color:#f0f0f0;font-size:11px;">Planet Cracker</div>
<div class="cb" style="left:32px;top:53px"><svg width="12" height="12"><path d="M2.3,6.4 L4.9,9.1 L9.7,2.6" fill="none" stroke="#3e3e3e" stroke-width="2.4"/></svg></div>
<div class="ab" style="left:48px;top:56px;color:#f0f0f0;font-size:11px;">Hydraulic Fracturer</div>
<div class="cb" style="left:32px;top:72px"><svg width="12" height="12"><path d="M2.3,6.4 L4.9,9.1 L9.7,2.6" fill="none" stroke="#3e3e3e" stroke-width="2.4"/></svg></div>
<div class="ab" style="left:48px;top:75px;color:#f0f0f0;font-size:11px;">Research Vessel</div>
<div class="cb" style="left:32px;top:91px"><svg width="12" height="12"><path d="M2.3,6.4 L4.9,9.1 L9.7,2.6" fill="none" stroke="#3e3e3e" stroke-width="2.4"/></svg></div>
<div class="ab" style="left:48px;top:94px;color:#f0f0f0;font-size:11px;">Orbital Array</div>
<div class="cb" style="left:32px;top:110px"><svg width="12" height="12"><path d="M2.3,6.4 L4.9,9.1 L9.7,2.6" fill="none" stroke="#3e3e3e" stroke-width="2.4"/></svg></div>
<div class="ab" style="left:48px;top:113px;color:#f0f0f0;font-size:11px;">Sunlifter</div>
<div class="cb" style="left:32px;top:129px"><svg width="12" height="12"><path d="M2.3,6.4 L4.9,9.1 L9.7,2.6" fill="none" stroke="#3e3e3e" stroke-width="2.4"/></svg></div>
<div class="ab" style="left:48px;top:132px;color:#f0f0f0;font-size:11px;">Cryostation</div>
<div class="cb" style="left:32px;top:148px"><svg width="12" height="12"><path d="M2.3,6.4 L4.9,9.1 L9.7,2.6" fill="none" stroke="#3e3e3e" stroke-width="2.4"/></svg></div>
<div class="ab" style="left:48px;top:151px;color:#f0f0f0;font-size:11px;">Space Beacon</div>
<div class="ab" style="left:8px;top:183px;width:300px;height:1px;background:#a4a4a4"></div>
<div class="cb" style="left:12px;top:187px"><svg width="12" height="12"><path d="M2.3,6.4 L4.9,9.1 L9.7,2.6" fill="none" stroke="#3e3e3e" stroke-width="2.4"/></svg></div>
<div class="ab" style="left:28px;top:190px;color:#f0f0f0;font-size:11px;">Crafting</div>
<div class="ab" style="left:84px;top:185px;color:#f0f0f0;font-size:11px;text-shadow:0 3px 4px rgba(170,170,170,.5)">trigger resources</div>
<div class="ab" style="left:8px;top:203px;width:300px;height:1px;background:#a4a4a4"></div>
<div class="cb" style="left:12px;top:207px"><svg width="12" height="12"><path d="M2.3,6.4 L4.9,9.1 L9.7,2.6" fill="none" stroke="#3e3e3e" stroke-width="2.4"/></svg></div>
<div class="ab" style="left:28px;top:210px;color:#f0f0f0;font-size:11px;">Trading</div>
<div class="ab" style="left:28px;top:224px;color:#f0f0f0;font-size:11px;text-shadow:0 3px 4px rgba(170,170,170,.5)">disable all enable all</div>
<div class="cb" style="left:32px;top:240px"></div>
<div class="ab" style="left:48px;top:243px;color:#f0f0f0;font-size:11px;">Dragons</div>
<div class="ab" style="left:28px;top:256px;width:300px;height:1px;background:#a4a4a4"></div>
<div class="cb" style="left:32px;top:260px"></div>
<div class="ab" style="left:48px;top:263px;color:#f0f0f0;font-size:11px;">Zebras</div>
<div class="ab" style="left:28px;top:276px;width:300px;height:1px;background:#a4a4a4"></div>
<div class="cb" style="left:32px;top:280px"></div>
<div class="ab" style="left:48px;top:283px;color:#f0f0f0;font-size:11px;">Lizards</div>
<div class="ab" style="left:28px;top:296px;width:300px;height:1px;background:#a4a4a4"></div>
<div class="cb" style="left:32px;top:300px"></div>
<div class="ab" style="left:48px;top:303px;color:#f0f0f0;font-size:11px;">Sharks</div>
<div class="ab" style="left:28px;top:316px;width:300px;height:1px;background:#a4a4a4"></div>
<div class="cb" style="left:32px;top:320px"></div>
<div class="ab" style="left:48px;top:323px;color:#f0f0f0;font-size:11px;">Griffins</div>
<div class="ab" style="left:28px;top:336px;width:300px;height:1px;background:#a4a4a4"></div>
<div class="cb" style="left:32px;top:340px"></div>
<div class="ab" style="left:48px;top:343px;color:#f0f0f0;font-size:11px;">Nagas</div>
<div class="ab" style="left:28px;top:356px;width:300px;height:1px;background:#a4a4a4"></div>
<div class="cb" style="left:32px;top:360px"></div>
<div class="ab" style="left:48px;top:363px;color:#f0f0f0;font-size:11px;">Spiders</div>
<div class="ab" style="left:28px;top:376px;width:300px;height:1px;background:#a4a4a4"></div>
<div class="cb" style="left:32px;top:380px"><svg width="12" height="12"><path d="M2.3,6.4 L4.9,9.1 L9.7,2.6" fill="none" stroke="#3e3e3e" stroke-width="2.4"/></svg></div>
<div class="ab" style="left:48px;top:383px;color:#f0f0f0;font-size:11px;">Leviathans</div>
<div class="ab" style="left:28px;top:396px;width:300px;height:1px;background:#a4a4a4"></div>
<div class="ab" style="left:8px;top:416px;width:300px;height:1px;background:#a4a4a4"></div>
<div class="cb" style="left:12px;top:420px"><svg width="12" height="12"><path d="M2.3,6.4 L4.9,9.1 L9.7,2.6" fill="none" stroke="#3e3e3e" stroke-width="2.4"/></svg></div>
<div class="ab" style="left:28px;top:423px;color:#f0f0f0;font-size:11px;">Hunting</div>
<div class="cb" style="left:12px;top:439px"><svg width="12" height="12"><path d="M2.3,6.4 L4.9,9.1 L9.7,2.6" fill="none" stroke="#3e3e3e" stroke-width="2.4"/></svg></div>
<div class="ab" style="left:28px;top:442px;color:#f0f0f0;font-size:11px;">Praising</div>
<div class="cb" style="left:12px;top:458px"><svg width="12" height="12"><path d="M2.3,6.4 L4.9,9.1 L9.7,2.6" fill="none" stroke="#3e3e3e" stroke-width="2.4"/></svg></div>
<div class="ab" style="left:28px;top:461px;color:#f0f0f0;font-size:11px;">Festival</div>
<div class="ab" style="left:17px;top:482px;width:15px;height:15px;border-radius:50%;background:#f7931a"></div>
<div class="ab" style="left:21px;top:484px;color:#fff;font-size:10px;font-family:'Liberation Sans';font-weight:bold;font-size:10px">฿</div>
<div class="ab" style="left:14px;top:498px;color:#f0f0f0;font-size:11px;"><span class="lk">1AQ1AC9W5CEAPgG5739XGXC5</span></div>
<svg class="ab" style="left:8px;top:525px" width="12" height="16"><path d="M1.5,3 L1.5,8 Q1.5,12.5 6,12.5 Q10.5,12.5 10.5,8 L10.5,3" fill="none" stroke="#d8e4ff" stroke-width="1.2"/><path d="M6,2 L6,15" stroke="#e8d080" stroke-width="1.3"/></svg>
<div class="ab" style="left:21px;top:527px;color:#f0f0f0;font-size:11px;">Year 1330 - Winter, day 42</div>
<div class="ab" style="left:8px;top:541px;width:300px;height:1px;background:#9a9a9a"></div>
<div class="ab" style="left:8px;top:553px;color:#f0f0f0;font-size:11px;">You are a kitten in a catnip</div>
<div class="ab" style="left:8px;top:567px;color:#f0f0f0;font-size:11px;">forest.</div>
<div class="ab" style="left:8px;top:581px;color:#f0f0f0;font-size:11px;"><span class="lk">Clear log</span> <span class="lk">[+] Log</span></div>
<div class="cb" style="left:136px;top:583px"><svg width="12" height="12"><path d="M2.3,6.4 L4.9,9.1 L9.7,2.6" fill="none" stroke="#3e3e3e" stroke-width="2.4"/></svg></div>
<div class="ab" style="left:152px;top:581px;color:#f0f0f0;font-size:11px;"><span class="lk">Show</span></div>
<div class="ab" style="left:8px;top:595px;color:#f0f0f0;font-size:11px;"><span class="lk">Filters</span> <span class="lk">pawse</span> <span class="lk">undo</span></div>
<div class="ab" style="left:8px;top:609px;color:#f0f0f0;font-size:11px;"><span class="lk">(18s)</span></div>
<div class="ab" style="left:8px;top:633px;color:#f2660f;font-size:11px;">›</div>
<div class="ab" style="left:20px;top:633px;color:#f2660f;font-size:11px;">Kittens have crafted 12K</div>
<div class="ab" style="left:20px;top:647px;color:#f2660f;font-size:11px;">Alloy</div>
<div class="ab" style="left:8px;top:661px;color:#f2660f;font-size:11px;">›</div>
<div class="ab" style="left:20px;top:661px;color:#f2660f;font-size:11px;">Kittens have crafted 29K</div>
<div class="ab" style="left:20px;top:675px;color:#f2660f;font-size:11px;">Plate</div>
<div class="ab" style="left:8px;top:704px;color:#f07848;font-size:10px;">YEAR 1330 - WINTER</div>
<div class="ab" style="left:8px;top:716px;width:300px;height:1px;background:#f06a2c"></div>
<div class="ab" style="left:8px;top:718px;color:#14a4e8;font-size:11px;">›</div>
<div class="ab" style="left:20px;top:718px;color:#14a4e8;font-size:11px;">Ivory Meteor fell near the</div>
<div class="ab" style="left:20px;top:732px;color:#14a4e8;font-size:11px;">village, +2560 ivory!</div>
<div class="ab" style="left:8px;top:761px;color:#f07848;font-size:10px;">YEAR 1330 - WINTER</div>
<div class="ab" style="left:8px;top:773px;width:300px;height:1px;background:#f06a2c"></div>
<div class="ab" style="left:8px;top:775px;color:#14a4e8;font-size:11px;">›</div>
<div class="ab" style="left:20px;top:775px;color:#14a4e8;font-size:11px;">A rift to the Unicorn</div>
<div class="ab" style="left:20px;top:789px;color:#14a4e8;font-size:11px;">Dimension has opened in the</div>
<div class="ab" style="left:20px;top:803px;color:#14a4e8;font-size:11px;">village, +500 unicorns!</div>
<div class="ab" style="left:8px;top:817px;color:#f2660f;font-size:11px;">›</div>
<div class="ab" style="left:20px;top:817px;color:#f2660f;font-size:11px;">Kittens have crafted 30K</div>
<div class="ab" style="left:20px;top:831px;color:#f2660f;font-size:11px;">Kerosene</div>
<div class="ab" style="left:8px;top:845px;color:#f2660f;font-size:11px;">›</div>
<div class="ab" style="left:20px;top:845px;color:#f2660f;font-size:11px;">Kittens have crafted 12K</div>
<div class="ab" style="left:20px;top:859px;color:#f2660f;font-size:11px;">Alloy</div>
<div class="ab" style="left:8px;top:873px;color:#f2660f;font-size:11px;">›</div>
<div class="ab" style="left:20px;top:873px;color:#f2660f;font-size:11px;">Kittens have crafted 11K</div>
<div class="ab" style="left:20px;top:887px;color:#f2660f;font-size:11px;">Alloy</div>
<div class="ab" style="left:8px;top:901px;color:#f2660f;font-size:11px;">›</div>
<div class="ab" style="left:20px;top:901px;color:#f2660f;font-size:11px;">Kittens have crafted 12K</div>
<div class="ab" style="left:20px;top:915px;color:#f2660f;font-size:11px;">Alloy</div>
<div class="ab" style="left:8px;top:929px;color:#f2660f;font-size:11px;">›</div>
<div class="ab" style="left:20px;top:929px;color:#f2660f;font-size:11px;">Kittens have crafted 12K</div>
<div class="ab" style="left:20px;top:943px;color:#f2660f;font-size:11px;">Alloy</div>
<div class="ab" style="left:8px;top:972px;color:#f07848;font-size:10px;">YEAR 1330 - WINTER</div>
<div class="ab" style="left:8px;top:984px;width:300px;height:1px;background:#f06a2c"></div>
<div class="ab" style="left:8px;top:986px;color:#aaa;font-size:11px;">›</div>
<div class="ab" style="left:20px;top:986px;color:#f0f0f0;font-size:11px;">Your hunters have returned</div>
<div class="ab" style="left:20px;top:1000px;color:#f0f0f0;font-size:11px;">from 264 hunts. +54.955K furs,</div>
<div class="ab" style="left:20px;top:1014px;color:#f0f0f0;font-size:11px;">+17.427K ivory</div>
<div class="ab" style="left:8px;top:1043px;color:#f07848;font-size:10px;">YEAR 1330 - WINTER</div>
<div class="ab" style="left:8px;top:1055px;width:300px;height:1px;background:#f06a2c"></div>
<div class="ab" style="left:8px;top:1057px;color:#aaa;font-size:11px;">›</div>
<div class="ab" style="left:20px;top:1057px;color:#f0f0f0;font-size:11px;">15 unicorns!</div>
<div class="ab" style="left:8px;top:1071px;color:#f2660f;font-size:11px;">›</div>
<div class="ab" style="left:20px;top:1071px;color:#f2660f;font-size:11px;">Sent 26.468K kittens on the</div>
<div class="ab" style="left:20px;top:1085px;color:#f2660f;font-size:11px;">hunt</div>
<div class="ab" style="left:8px;top:1099px;color:#f2660f;font-size:11px;">›</div>
<div class="ab" style="left:20px;top:1099px;color:#f2660f;font-size:11px;">Kittens have crafted 11K</div>
<div class="ab" style="left:20px;top:1113px;color:#f2660f;font-size:11px;">Blueprint</div>
<div class="ab" style="left:8px;top:1127px;color:#f2660f;font-size:11px;">›</div>
<div class="ab" style="left:20px;top:1127px;color:#f2660f;font-size:11px;">Kittens have crafted 11K</div>
<div class="ab" style="left:20px;top:1141px;color:#f2660f;font-size:11px;">Compendium</div>
<div class="ab" style="left:8px;top:1155px;color:#f2660f;font-size:11px;">›</div>
<div class="ab" style="left:20px;top:1155px;color:#f2660f;font-size:11px;">Kittens have crafted 12K</div>
<div class="ab" style="left:20px;top:1169px;color:#f2660f;font-size:11px;">Alloy</div>
<div class="ab" style="left:8px;top:1183px;color:#f2660f;font-size:11px;">›</div>
<div class="ab" style="left:20px;top:1183px;color:#f2660f;font-size:11px;">Kittens have crafted 11K</div>
<div class="ab" style="left:20px;top:1197px;color:#f2660f;font-size:11px;">Alloy</div>
<div class="ab" style="left:8px;top:1211px;color:#f2660f;font-size:11px;">›</div>
<div class="ab" style="left:20px;top:1211px;color:#f2660f;font-size:11px;">Kittens have crafted 12K</div>
<div class="ab" style="left:20px;top:1225px;color:#f2660f;font-size:11px;">Alloy</div>
<div class="ab" style="left:8px;top:1239px;color:#f2660f;font-size:11px;">›</div>
<div class="ab" style="left:20px;top:1239px;color:#f2660f;font-size:11px;">Kittens have crafted 12K</div>
<div class="ab" style="left:20px;top:1253px;color:#f2660f;font-size:11px;">Alloy</div>
<div class="ab" style="left:8px;top:1267px;color:#f2660f;font-size:11px;">›</div>
<div class="ab" style="left:20px;top:1267px;color:#f2660f;font-size:11px;">Kittens have crafted 11K</div>
<div class="ab" style="left:20px;top:1281px;color:#f2660f;font-size:11px;">Alloy</div>
<div class="ab" style="left:8px;top:1295px;color:#f2660f;font-size:11px;">›</div>
<div class="ab" style="left:20px;top:1295px;color:#f2660f;font-size:11px;">Kittens have crafted 12K</div>
<div class="ab" style="left:20px;top:1309px;color:#f2660f;font-size:11px;">Alloy</div>
<div class="ab" style="left:8px;top:1323px;color:#f2660f;font-size:11px;">›</div>
<div class="ab" style="left:20px;top:1323px;color:#f2660f;font-size:11px;">Kittens have crafted 12K</div>
<div class="ab" style="left:20px;top:1337px;color:#f2660f;font-size:11px;">Alloy</div>
<div class="ab" style="left:8px;top:1366px;color:#f07848;font-size:10px;">YEAR 1330 - WINTER</div>
<div class="ab" style="left:8px;top:1378px;width:300px;height:1px;background:#f06a2c"></div>
<div class="ab" style="left:8px;top:1380px;color:#14a4e8;font-size:11px;">›</div>
<div class="ab" style="left:20px;top:1380px;color:#14a4e8;font-size:11px;">Ivory Meteor fell near the</div>
<div class="ab" style="left:20px;top:1394px;color:#14a4e8;font-size:11px;">village, +2600 ivory!</div>
<div class="ab" style="left:8px;top:1408px;color:#f2660f;font-size:11px;">›</div>
<div class="ab" style="left:20px;top:1408px;color:#f2660f;font-size:11px;">Kittens have crafted 12K</div>
<div class="ab" style="left:20px;top:1422px;color:#f2660f;font-size:11px;">Alloy</div>
<div class="ab" style="left:8px;top:1436px;color:#f2660f;font-size:11px;">›</div>
<div class="ab" style="left:20px;top:1436px;color:#f2660f;font-size:11px;">Kittens have crafted 11K</div>
<div class="ab" style="left:20px;top:1450px;color:#f2660f;font-size:11px;">Alloy</div>
<div class="ab" style="left:8px;top:1464px;color:#f2660f;font-size:11px;">›</div>
<div class="ab" style="left:20px;top:1464px;color:#f2660f;font-size:11px;">Kittens have crafted 12K</div>
<div class="ab" style="left:20px;top:1478px;color:#f2660f;font-size:11px;">Alloy</div>
<div class="ab" style="left:8px;top:1492px;color:#f2660f;font-size:11px;">›</div>
<div class="ab" style="left:20px;top:1492px;color:#f2660f;font-size:11px;">Kittens have crafted 11K</div>
<div class="ab" style="left:20px;top:1506px;color:#f2660f;font-size:11px;">Compendium</div>
<div class="ab" style="left:8px;top:1520px;color:#f2660f;font-size:11px;">›</div>
<div class="ab" style="left:20px;top:1520px;color:#f2660f;font-size:11px;">Kittens have crafted 12K</div>
<div class="ab" style="left:20px;top:1534px;color:#f2660f;font-size:11px;">Alloy</div>
<div class="ab" style="left:8px;top:1548px;color:#f2660f;font-size:11px;">›</div>
<div class="ab" style="left:20px;top:1548px;color:#f2660f;font-size:11px;">Kittens have crafted 30K</div>
<div class="ab" style="left:20px;top:1562px;color:#f2660f;font-size:11px;">Plate</div>
<div class="ab" style="left:8px;top:1576px;color:#f2660f;font-size:11px;">›</div>
<div class="ab" style="left:20px;top:1576px;color:#f2660f;font-size:11px;">Kittens have crafted 11K</div>
<div class="ab" style="left:20px;top:1590px;color:#f2660f;font-size:11px;">Alloy</div>
<div class="ab" style="left:8px;top:1604px;color:#f2660f;font-size:11px;">›</div>
<div class="ab" style="left:20px;top:1604px;color:#f2660f;font-size:11px;">Kittens have crafted 12K</div>
<div class="ab" style="left:20px;top:1618px;color:#f2660f;font-size:11px;">Alloy</div>
<div class="ab" style="left:8px;top:1632px;color:#f2660f;font-size:11px;">›</div>
<div class="ab" style="left:20px;top:1632px;color:#f2660f;font-size:11px;">Kittens have crafted 12K</div>
<div class="ab" style="left:20px;top:1646px;color:#f2660f;font-size:11px;">Alloy</div>
<div class="ab" style="left:8px;top:1660px;color:#f2660f;font-size:11px;">›</div>
<div class="ab" style="left:20px;top:1660px;color:#f2660f;font-size:11px;">Kittens have crafted 11K</div>
<div class="ab" style="left:20px;top:1674px;color:#f2660f;font-size:11px;">Alloy</div>
</div>
<div class="ab" style="left:946px;top:1857px;color:#f0f0f0;font-size:11px;"><span class="lk">reddit</span> | <span class="lk">wiki</span> | <span class="lk">help</span> | <span class="lk">credits</span> | <span class="lk">donate</span></div>
<div class="ab" style="left:8px;top:1880px;width:1200px;height:18px;background:#f0f0f0"></div>
<div class="ab" style="left:25px;top:1882px;width:1075px;height:14px;background:#c1c1c1"></div>
<div class="ab" style="left:12px;top:1885px;width:0;height:0;border-top:4px solid transparent;border-bottom:4px solid transparent;border-right:5px solid #a3a3a3"></div>
<div class="ab" style="left:1197px;top:1885px;width:0;height:0;border-top:4px solid transparent;border-bottom:4px solid transparent;border-left:5px solid #505050"></div>
<div class="ab" style="left:279px;top:1898px;width:160px;height:8px;background:#2e2e2e"></div>
<div class="ab" style="left:1208px;top:365px;width:8px;height:23px;background:#3a3a3a"></div>
<div class="ab" style="left:1208px;top:388px;width:8px;height:37px;background:#202020"></div>
<div class="ab" style="left:1208px;top:425px;width:8px;height:1px;background:#aaa"></div>
<div class="ab" style="left:1208px;top:426px;width:8px;height:1109px;background:#4a4a4a"></div>
<div class="ab" style="left:980px;top:1771px;width:152px;height:46px;border-radius:0 23px 23px 0;background:#5b5b5b"></div>
<div class="ab" style="left:952px;top:1765px;width:57px;height:57px;border-radius:50%;background:#585858;box-shadow:inset 0 0 0 3px #535353"></div>
<svg class="ab" style="left:950px;top:1760px" width="190" height="60"><circle cx="46" cy="19" r="4" fill="#8a3a36"/><path d="M13,24 L51,29 L30,33 Z" fill="#5f8f3a"/><path d="M30,33 L51,29 L42,44 Z" fill="#3f6e22"/><path d="M13,24 L30,33 L27,44 Z" fill="#4e7e2c"/><path d="M22,36 Q26,31 30,36 L30,42 L22,42 Z" fill="#9aa890" opacity=".55"/><path d="M77,21 Q75,23 76,27 Q79,36 87,40 Q90,41 92,39 L93,37 L89,34 L86,36 Q81,33 79,28 L81,25 L79,21 Z" fill="#3a3a3a"/><path d="M85,22 L91,16 M88,16 L91,16 L91,19 M84,25 L84,22 L87,22" fill="none" stroke="#3a3a3a" stroke-width="1.5"/><ellipse cx="118" cy="27" rx="8" ry="7" fill="#3a3a3a"/><path d="M112,31 L111,36 L116,33 Z" fill="#3a3a3a"/><circle cx="114.5" cy="27" r="1" fill="#5b5b5b"/><circle cx="118" cy="27" r="1" fill="#5b5b5b"/><circle cx="121.5" cy="27" r="1" fill="#5b5b5b"/><path d="M146,21 Q146,18 149,18 L150,18 Q153,18 153,21 L154,30 L157,33 L142,33 L145,30 Z" fill="#3a3a3a" transform="translate(2 0)"/><circle cx="151.5" cy="35" r="1.5" fill="#3a3a3a"/></svg>
<div class="ab sans" style="left:1030px;top:1801px;font-size:11px;line-height:12px;color:#2a2a38">0</div>
<div class="ab sans" style="left:1065px;top:1801px;font-size:11px;line-height:12px;color:#2a2a38">1</div>
<div class="ab sans" style="left:1088px;top:1801px;font-size:11px;line-height:12px;color:#2a2a38">11934</div>
</body></html>
